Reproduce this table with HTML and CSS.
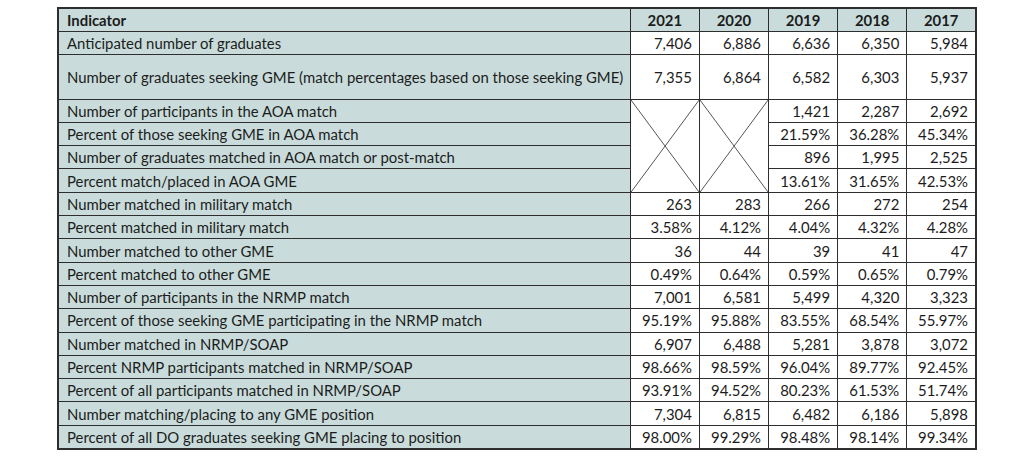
FILE: index.html
```html
<!DOCTYPE html>
<html>
<head>
<meta charset="utf-8">
<link rel="stylesheet" href="styles.css">
</head>
<body>
<table class="gme">
  <colgroup><col class="c-ind"><col class="c-yr"><col class="c-yr"><col class="c-yr"><col class="c-yr"><col class="c-yr"></colgroup>
  <thead>
    <tr class="row"><th class="ind">Indicator</th><th>2021</th><th>2020</th><th>2019</th><th>2018</th><th>2017</th></tr>
  </thead>
  <tbody>
    <tr class="row"><td class="ind">Anticipated number of graduates</td><td>7,406</td><td>6,886</td><td>6,636</td><td>6,350</td><td>5,984</td></tr>
    <tr class="row tall"><td class="ind">Number of graduates seeking GME (match percentages based on those seeking GME)</td><td>7,355</td><td>6,864</td><td>6,582</td><td>6,303</td><td>5,937</td></tr>
    <tr class="row"><td class="ind">Number of participants in the AOA match</td>
      <td class="na" rowspan="4"><svg class="cross" viewBox="0 0 100 100" preserveAspectRatio="none"><line x1="0" y1="0" x2="100" y2="100" vector-effect="non-scaling-stroke"/><line x1="100" y1="0" x2="0" y2="100" vector-effect="non-scaling-stroke"/></svg></td>
      <td class="na" rowspan="4"><svg class="cross" viewBox="0 0 100 100" preserveAspectRatio="none"><line x1="0" y1="0" x2="100" y2="100" vector-effect="non-scaling-stroke"/><line x1="100" y1="0" x2="0" y2="100" vector-effect="non-scaling-stroke"/></svg></td>
      <td>1,421</td><td>2,287</td><td>2,692</td></tr>
    <tr class="row"><td class="ind">Percent of those seeking GME in AOA match</td><td>21.59%</td><td>36.28%</td><td>45.34%</td></tr>
    <tr class="row"><td class="ind">Number of graduates matched in AOA match or post-match</td><td>896</td><td>1,995</td><td>2,525</td></tr>
    <tr class="row"><td class="ind">Percent match/placed in AOA GME</td><td>13.61%</td><td>31.65%</td><td>42.53%</td></tr>
    <tr class="row"><td class="ind">Number matched in military match</td><td>263</td><td>283</td><td>266</td><td>272</td><td>254</td></tr>
    <tr class="row"><td class="ind">Percent matched in military match</td><td>3.58%</td><td>4.12%</td><td>4.04%</td><td>4.32%</td><td>4.28%</td></tr>
    <tr class="row"><td class="ind">Number matched to other GME</td><td>36</td><td>44</td><td>39</td><td>41</td><td>47</td></tr>
    <tr class="row"><td class="ind">Percent matched to other GME</td><td>0.49%</td><td>0.64%</td><td>0.59%</td><td>0.65%</td><td>0.79%</td></tr>
    <tr class="row"><td class="ind">Number of participants in the NRMP match</td><td>7,001</td><td>6,581</td><td>5,499</td><td>4,320</td><td>3,323</td></tr>
    <tr class="row"><td class="ind">Percent of those seeking GME participating in the NRMP match</td><td>95.19%</td><td>95.88%</td><td>83.55%</td><td>68.54%</td><td>55.97%</td></tr>
    <tr class="row"><td class="ind">Number matched in NRMP/SOAP</td><td>6,907</td><td>6,488</td><td>5,281</td><td>3,878</td><td>3,072</td></tr>
    <tr class="row"><td class="ind">Percent NRMP participants matched in NRMP/SOAP</td><td>98.66%</td><td>98.59%</td><td>96.04%</td><td>89.77%</td><td>92.45%</td></tr>
    <tr class="row"><td class="ind">Percent of all participants matched in NRMP/SOAP</td><td>93.91%</td><td>94.52%</td><td>80.23%</td><td>61.53%</td><td>51.74%</td></tr>
    <tr class="row"><td class="ind">Number matching/placing to any GME position</td><td>7,304</td><td>6,815</td><td>6,482</td><td>6,186</td><td>5,898</td></tr>
    <tr class="row"><td class="ind">Percent of all DO graduates seeking GME placing to position</td><td>98.00%</td><td>99.29%</td><td>98.48%</td><td>98.14%</td><td>99.34%</td></tr>
  </tbody>
</table>
</body>
</html>
```
FILE: styles.css
```css
html, body {
  margin: 0;
  padding: 0;
  background: #ffffff;
}
body {
  padding: 7px 0 0 57px;
  font-family: Lato, "Open Sans", sans-serif;
  color: #1c1c1c;
}
.gme {
  border-collapse: collapse;
  border: 2px solid #2e2e2e;
  font-size: 14.9px;
  table-layout: fixed;
  width: 920px;
}
.c-ind {
  width: 571px;
}
.c-yr {
  width: 69px;
}
.gme th, .gme td {
  border: 1px solid #2e2e2e;
  padding: 0 7px 0 7px;
  text-align: right;
  white-space: nowrap;
  line-height: 18px;
}
.gme th {
  background: #c9dcdb;
  text-align: center;
  font-weight: 700;
}
.gme th.ind, .gme td.ind {
  text-align: left;
  background: #c9dcdb;
  padding-left: 8px;
}
.row {
  height: 23.3px;
}
.row.tall {
  height: 44.5px;
}
.na {
  position: relative;
  padding: 0;
}
.cross {
  position: absolute;
  left: 0;
  top: 0;
  width: 100%;
  height: 100%;
  display: block;
}
.cross line {
  stroke: #555555;
  stroke-width: 1;
}
```
